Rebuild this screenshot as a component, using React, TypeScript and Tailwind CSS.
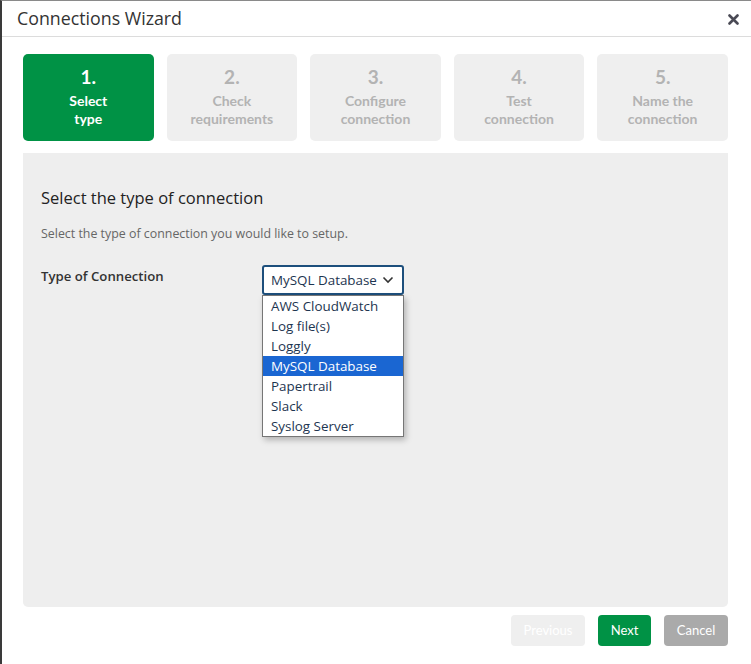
import React from 'react';

const steps = [
  { n: '1.', label: ['Select', 'type'] },
  { n: '2.', label: ['Check', 'requirements'] },
  { n: '3.', label: ['Configure', 'connection'] },
  { n: '4.', label: ['Test', 'connection'] },
  { n: '5.', label: ['Name the', 'connection'] },
];

const options = ['AWS CloudWatch', 'Log file(s)', 'Loggly', 'MySQL Database', 'Papertrail', 'Slack', 'Syslog Server'];

const ui = "font-['Open_Sans',sans-serif]";
const lato = "font-['Lato',sans-serif]";

export default function App() {
  const current = 0;
  return (
    <div className="w-[751px] h-[664px] bg-white border-l-2 border-l-[#3a3a3a] border-t border-t-[#8a8a8a] flex flex-col overflow-hidden">
      {/* header */}
      <div className="h-[36px] border-b border-[#dcdcdc] flex items-center justify-between pl-[15px] pr-[12px]">
        <h1 className={`${ui} text-[17.8px] text-[#333]`}>Connections Wizard</h1>
        <svg width="11" height="11" viewBox="0 0 11 11" className="mt-[1px]">
          <path d="M1.5 1.5 L9.5 9.5 M9.5 1.5 L1.5 9.5" stroke="#4a4a55" strokeWidth="2.6" strokeLinecap="round" />
        </svg>
      </div>

      {/* steps */}
      <div className={`${lato} flex gap-[13px] pl-[21px] pr-[23px] mt-[17px]`}>
        {steps.map((s, i) => (
          <div
            key={s.n}
            className={`flex-1 h-[87px] rounded-[5px] flex flex-col items-center pt-[12px] font-bold ${
              i === current ? 'bg-[#009245] text-white' : 'bg-[#efefef] text-[#b3b3b3]'
            }`}
          >
            <div className="text-[19px] leading-[22px]">{s.n}</div>
            <div className="text-[14px] leading-[18px] mt-[4px] text-center">
              {s.label[0]}
              <br />
              {s.label[1]}
            </div>
          </div>
        ))}
      </div>

      {/* body panel */}
      <div className="ml-[21px] mr-[23px] mt-[12px] h-[454px] bg-[#eeeeee] rounded-b-[5px] pt-[34px] px-[18px]">
        <h2 className={`${ui} text-[16.5px] text-[#222] leading-[22px]`}>Select the type of connection</h2>
        <p className={`${ui} text-[12.4px] text-[#666] mt-[16px]`}>Select the type of connection you would like to setup.</p>
        <div className="flex mt-[21px]">
          <div className={`${ui} w-[221px] text-[13.2px] font-semibold text-[#333] pt-[2px]`}>Type of Connection</div>
          <div className="relative">
            <div className={`${ui} w-[142px] h-[30px] bg-white border-2 border-[#1d4f7c] rounded-[3px] flex items-center justify-between pl-[7px] pr-[8px] text-[13.4px] text-[#1d3550]`}>
              <span>MySQL Database</span>
              <svg width="12" height="8" viewBox="0 0 12 8">
                <path d="M1.5 1.5 L6 6 L10.5 1.5" fill="none" stroke="#333" strokeWidth="1.6" />
              </svg>
            </div>
            <ul className={`${ui} absolute left-0 top-[30px] w-[142px] bg-white border border-[#767676] shadow-[2px_3px_6px_rgba(0,0,0,0.25)] text-[13.4px] text-[#1d3550]`}>
              {options.map((o) => (
                <li
                  key={o}
                  className={`h-[20px] leading-[20px] pl-[8px] ${o === 'MySQL Database' ? 'bg-[#1a66d2] text-white' : ''}`}
                >
                  {o}
                </li>
              ))}
            </ul>
          </div>
        </div>
      </div>

      {/* footer */}
      <div className={`${lato} flex justify-end gap-[13px] pr-[23px] mt-[8px] text-[13px]`}>
        <button className="w-[74px] h-[31px] rounded-[4px] bg-[#efefef] text-white">Previous</button>
        <button className="w-[53px] h-[31px] rounded-[4px] bg-[#009245] text-white">Next</button>
        <button className="w-[64px] h-[31px] rounded-[4px] bg-[#aaaaaa] text-white">Cancel</button>
      </div>
    </div>
  );
}
